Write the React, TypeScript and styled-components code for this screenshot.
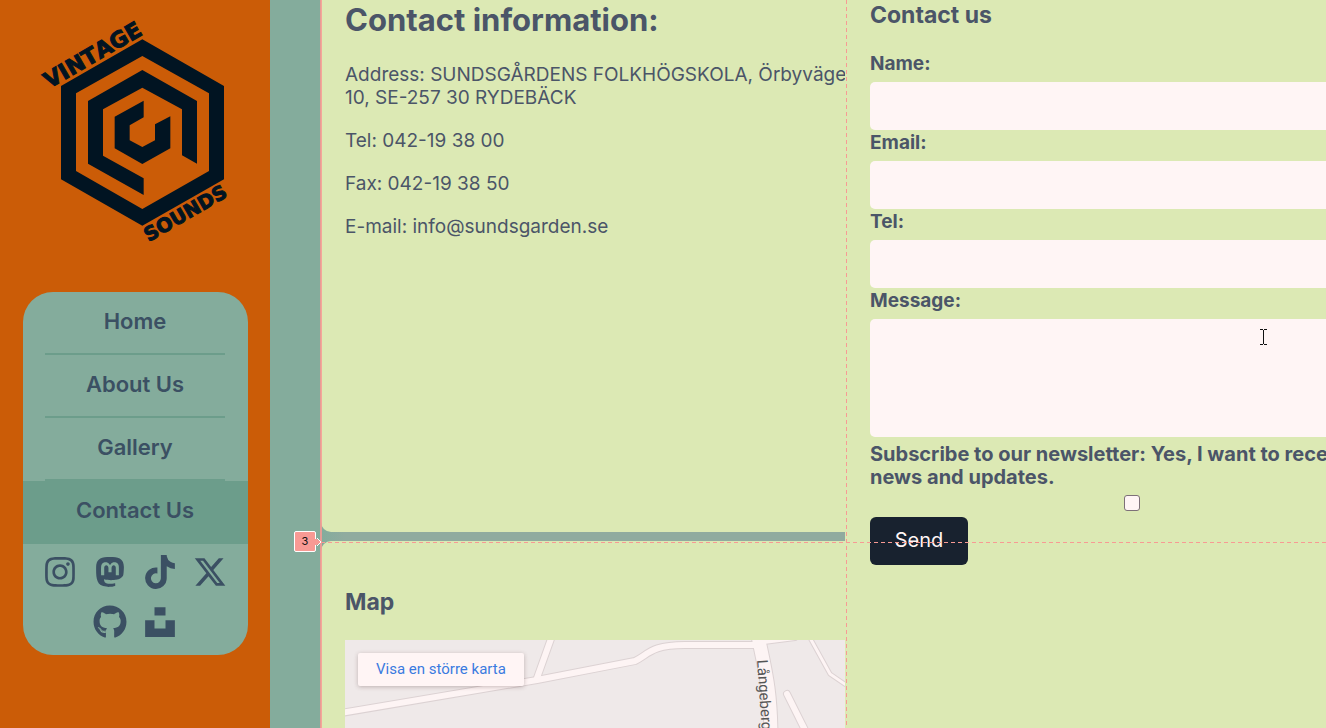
import React from "react";
import styled, { createGlobalStyle } from "styled-components";
import {
  FaGithub,
  FaInstagram,
  FaMastodon,
  FaTiktok,
  FaUnsplash,
  FaXTwitter,
} from "react-icons/fa6";

const color = {
  orange: "#cb5c07",
  teal: "#84ac9c",
  tealDark: "#6c9d8b",
  gap: "#90ab9f",
  lime: "#dce9b4",
  ink: "#4b5568",
  navInk: "#3b5063",
  night: "#18222f",
  logo: "#011422",
  field: "#fff5f5",
  guide: "#f89a94",
};

const GlobalStyle = createGlobalStyle`
  *, *::before, *::after { box-sizing: border-box; }
  body {
    margin: 0;
    background: ${color.teal};
    color: ${color.ink};
    font-family: Inter, "Liberation Sans", sans-serif;
    font-size: 19px;
    line-height: 23px;
  }
`;

const Shell = styled.div`
  display: flex;
  height: 100vh;
  overflow: hidden;
`;

const Sidebar = styled.aside`
  flex: 0 0 270px;
  padding: 10px 22px 0 23px;
  background: ${color.orange};
`;

const Logo = styled.svg`
  display: block;
  width: 210px;
  height: 240px;
  margin: 0 0 42px 7px;
  overflow: visible;
`;

const NavCard = styled.nav`
  padding-bottom: 8px;
  border-radius: 30px;
  background: ${color.teal};
  overflow: hidden;
`;

const NavLink = styled.a<{ $active?: boolean }>`
  display: block;
  height: 63px;
  padding: 0 23px 0 22px;
  background: ${(p) => (p.$active ? color.tealDark : "transparent")};
  color: ${color.navInk};
  font-size: 22px;
  font-weight: 600;
  line-height: 58px;
  text-align: center;
  text-decoration: none;
`;

const NavLabel = styled.span`
  display: block;
  height: 63px;
  border-bottom: 2px solid ${color.tealDark};
`;

const Socials = styled.div`
  display: flex;
  flex-wrap: wrap;
  justify-content: center;
  padding: 3px 13px 0 12px;
`;

const SocialLink = styled.a`
  display: flex;
  align-items: center;
  justify-content: center;
  width: 50px;
  height: 50px;
  color: ${color.navInk};
  font-size: 34px;
`;

const Main = styled.main`
  position: relative;
  flex: 1;
  min-width: 0;
  margin-left: 51px;
`;

const Board = styled.div`
  display: grid;
  grid-template-columns: 1fr 1fr;
  grid-template-rows: 532px 1fr;
  row-gap: 9px;
  width: calc(100% + 43px);
  height: 100%;
  background: linear-gradient(to right, ${color.teal}, ${color.gap} 24px);
`;

const Panel = styled.section`
  min-width: 0;
  padding-left: 24px;
  overflow: hidden;
  background: ${color.lime};
`;

const InfoPanel = styled(Panel)`
  border-bottom-left-radius: 10px;
`;

const MapPanel = styled(Panel)`
  border-top-left-radius: 10px;
  padding-top: 46px;
`;

const FormPanel = styled(Panel)`
  grid-column: 2;
  grid-row: 1 / 3;
  padding-left: 25px;
`;

const Title = styled.h1`
  margin: 0 0 23px;
  font-size: 31px;
  font-weight: 700;
  line-height: 40px;
`;

const Heading = styled.h2<{ $gap: number }>`
  margin: 0 0 ${(p) => p.$gap}px;
  font-size: 23px;
  font-weight: 700;
  line-height: 30px;
`;

const Line = styled.p`
  margin: 0 0 20px;
  white-space: nowrap;
`;

const Form = styled.form`
  display: flex;
  flex-direction: column;
  align-items: stretch;
  width: calc(100% + 25px);
`;

const Label = styled.label`
  display: block;
  height: 24px;
  margin-bottom: 7px;
  font-weight: 700;
  line-height: 25px;
`;

const Input = styled.input`
  height: 48px;
  padding: 0 12px;
  border: 0;
  border-radius: 5px;
  background: ${color.field};
  font: inherit;
`;

const TextArea = styled.textarea`
  height: 118px;
  margin-bottom: 6px;
  padding: 12px;
  border: 0;
  border-radius: 5px;
  background: ${color.field};
  font: inherit;
  resize: none;
`;

const Consent = styled.label`
  font-size: 20px;
  font-weight: 700;
  white-space: nowrap;
`;

const Checkbox = styled.input`
  align-self: center;
  appearance: none;
  width: 16px;
  height: 16px;
  margin: 6px 0;
  border: 1px solid #7d7078;
  border-radius: 3px;
  background: ${color.field};
`;

const SendButton = styled.button`
  align-self: flex-start;
  width: 98px;
  height: 48px;
  padding: 0 0 2px;
  border: 0;
  border-radius: 6px;
  background: ${color.night};
  color: ${color.field};
  font: inherit;
  font-size: 20px;
`;

const MapFrame = styled.div`
  position: relative;
  height: 400px;
  background: #efe9e9;
`;

const MapDrawing = styled.svg`
  display: block;
  width: 500px;
  height: 400px;
`;

const MapLink = styled.a`
  position: absolute;
  top: 13px;
  left: 13px;
  padding: 0 18px;
  border-radius: 2px;
  background: ${color.field};
  box-shadow: 0 1px 4px rgba(80, 50, 50, 0.3);
  color: #3a7be0;
  font-family: Roboto, sans-serif;
  font-size: 15px;
  line-height: 33px;
  text-decoration: none;
  white-space: nowrap;
`;

const Guide = styled.div`
  position: absolute;
  pointer-events: none;
`;

const EdgeGuide = styled(Guide)`
  top: 0;
  bottom: 0;
  left: -1px;
  width: 2px;
  background: ${color.guide};
  opacity: 0.85;
`;

const ColumnGuide = styled(Guide)`
  top: 0;
  bottom: 0;
  left: 525px;
  width: 1px;
  background: repeating-linear-gradient(to bottom, ${color.guide} 0 4px, transparent 4px 7px);
`;

const RowGuide = styled(Guide)`
  top: 542px;
  left: 0;
  right: 0;
  height: 1px;
  background: repeating-linear-gradient(to right, ${color.guide} 0 4px, transparent 4px 7px);
`;

const LineBadge = styled.div`
  position: absolute;
  top: 531px;
  left: -27px;
  width: 22px;
  border: 1px solid #fff;
  border-radius: 2px;
  background: ${color.guide};
  color: #111;
  font-size: 11px;
  line-height: 19px;
  text-align: center;
`;

const BadgeArrow = styled.svg`
  position: absolute;
  top: 6px;
  left: 20px;
  width: 7px;
  height: 8px;
`;

const Caret = styled.svg`
  position: absolute;
  top: 329px;
  left: 938px;
  width: 9px;
  height: 16px;
`;

const pages = ["Home", "About Us", "Gallery", "Contact Us"];

const socials = [
  { name: "Instagram", Icon: FaInstagram },
  { name: "Mastodon", Icon: FaMastodon },
  { name: "TikTok", Icon: FaTiktok },
  { name: "X", Icon: FaXTwitter },
  { name: "GitHub", Icon: FaGithub },
  { name: "Unsplash", Icon: FaUnsplash },
];

function BrandLogo() {
  return (
    <Logo viewBox="0 0 630 720" role="img" aria-label="Vintage Sounds" fill={color.logo}>
      <path
        fillRule="evenodd"
        d="M337 88 582 228V508L337 647 93 508V228ZM337 138 138 250V483L337 597 537 483V250Z"
      />
      <path d="M337 180 501 273V461L456 436V298L337 233 219 298V437L341 505V555L174 461V273Z" />
      <path d="M341 272V322L299 346V391L337 411 375 391V343L421 319V415L337 462 254 415V320Z" />
      <g
        fontFamily="DejaVu Sans, sans-serif"
        fontWeight="700"
        stroke={color.logo}
        strokeWidth="3"
        style={{ fontKerning: "none" }}
      >
        <text transform="translate(58 236) rotate(-30)" fontSize="66">
          VINTAGE
        </text>
        <text transform="translate(356 696) rotate(-30)" fontSize="58">
          SOUNDS
        </text>
      </g>
    </Logo>
  );
}

function StreetMap() {
  const roads = [
    { d: "M-4 73 192 40 290 21C303 15 305 5 340 5H412", w: 6 },
    { d: "M192 38 207 -4", w: 6 },
    { d: "M412 3 450 -2", w: 4 },
    { d: "M413 -4C420 30 426 50 426 100", w: 13 },
    { d: "M464 -4 485 34 504 47", w: 3 },
    { d: "M442 54 475 120", w: 6 },
  ];
  return (
    <MapDrawing viewBox="0 0 500 400" aria-hidden="true" fill="none" strokeLinecap="round">
      {roads.map((r) => (
        <path key={r.d} d={r.d} stroke="#dcd2d3" strokeWidth={r.w + 2} />
      ))}
      {roads.map((r) => (
        <path key={r.d} d={r.d} stroke="#fdf4f4" strokeWidth={r.w} />
      ))}
      <text
        transform="translate(412 20) rotate(86)"
        fill="#555"
        fontFamily="Roboto, sans-serif"
        fontSize="15"
      >
        Långeberg
      </text>
    </MapDrawing>
  );
}

export default function App() {
  return (
    <>
      <GlobalStyle />
      <Shell>
        <Sidebar>
          <BrandLogo />
          <NavCard>
            {pages.map((page) => (
              <NavLink key={page} href="#" $active={page === "Contact Us"}>
                <NavLabel>{page}</NavLabel>
              </NavLink>
            ))}
            <Socials>
              {socials.map(({ name, Icon }) => (
                <SocialLink key={name} href="#" aria-label={name}>
                  <Icon />
                </SocialLink>
              ))}
            </Socials>
          </NavCard>
        </Sidebar>
        <Main>
          <Board>
            <InfoPanel>
              <Title>Contact information:</Title>
              <Line>
                Address: SUNDSGÅRDENS FOLKHÖGSKOLA, Örbyvägen
                <br />
                10, SE-257 30 RYDEBÄCK
              </Line>
              <Line>Tel: 042-19 38 00</Line>
              <Line>Fax: 042-19 38 50</Line>
              <Line>E-mail: info@sundsgarden.se</Line>
            </InfoPanel>
            <MapPanel>
              <Heading $gap={23}>Map</Heading>
              <MapFrame>
                <StreetMap />
                <MapLink href="#">Visa en större karta</MapLink>
              </MapFrame>
            </MapPanel>
            <FormPanel>
              <Heading $gap={21}>Contact us</Heading>
              <Form>
                <Label htmlFor="name">Name:</Label>
                <Input id="name" type="text" />
                <Label htmlFor="email">Email:</Label>
                <Input id="email" type="email" />
                <Label htmlFor="tel">Tel:</Label>
                <Input id="tel" type="tel" />
                <Label htmlFor="message">Message:</Label>
                <TextArea id="message" />
                <Consent htmlFor="newsletter">
                  Subscribe to our newsletter: Yes, I want to receive
                  <br />
                  news and updates.
                </Consent>
                <Checkbox id="newsletter" type="checkbox" />
                <SendButton type="button">Send</SendButton>
              </Form>
            </FormPanel>
          </Board>
          <EdgeGuide />
          <ColumnGuide />
          <RowGuide />
          <LineBadge>
            3
            <BadgeArrow viewBox="0 0 7 8">
              <path d="M0 1H2L6 4 2 7H0Z" fill={color.guide} />
              <path d="M2 0 6 4 2 8" fill="none" stroke="#fff" />
            </BadgeArrow>
          </LineBadge>
          <Caret viewBox="0 0 9 16" aria-hidden="true" shapeRendering="crispEdges">
            <path d="M1 0H4V1H1ZM5 0H8V1H5ZM4 1H5V15H4ZM1 15H4V16H1ZM5 15H8V16H5Z" fill="#111" />
          </Caret>
        </Main>
      </Shell>
    </>
  );
}
